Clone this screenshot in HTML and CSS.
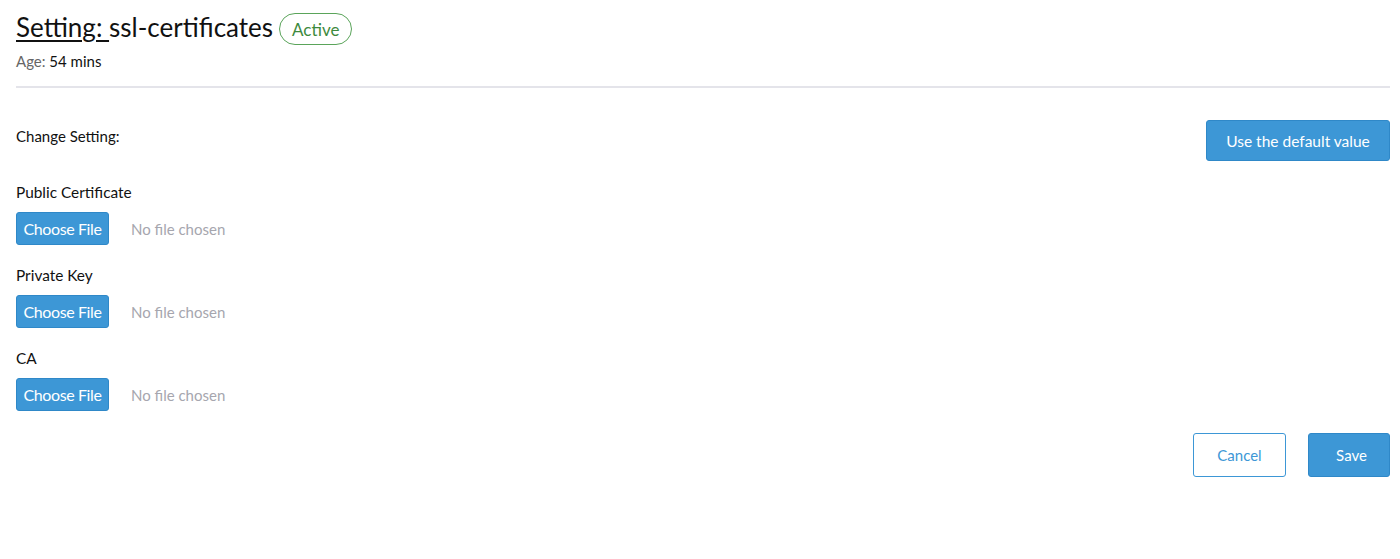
FILE: index.html
```html
<!DOCTYPE html>
<html lang="en">
<head>
    <meta charset="UTF-8">
    <title>Setting: ssl-certificates</title>
    <link rel="stylesheet" href="styles.css">
</head>
<body>

    <div class="page">
        <div class="header">
            <h1><span class="title-label">Setting: </span>ssl-certificates</h1>
            <span class="badge">Active</span>
        </div>
        <p class="age"><span class="age-label">Age:</span> 54 mins</p>

        <hr class="divider">

        <form class="setting-form">
            <div class="form-top">
                <p class="section-label">Change Setting:</p>
                <button type="button" class="btn btn-primary btn-default">Use the default value</button>
            </div>

            <div class="field">
                <label>Public Certificate</label>
                <div class="file-row">
                    <span class="file-btn">Choose File</span>
                    <span class="file-name">No file chosen</span>
                </div>
            </div>

            <div class="field">
                <label>Private Key</label>
                <div class="file-row">
                    <span class="file-btn">Choose File</span>
                    <span class="file-name">No file chosen</span>
                </div>
            </div>

            <div class="field">
                <label>CA</label>
                <div class="file-row">
                    <span class="file-btn">Choose File</span>
                    <span class="file-name">No file chosen</span>
                </div>
            </div>

            <div class="actions">
                <button type="button" class="btn btn-outline">Cancel</button>
                <button type="button" class="btn btn-primary btn-save">Save</button>
            </div>
        </form>
    </div>

</body>
</html>
```

FILE: styles.css
```css
/* Couleurs */
:root {
    --text: #111111;
    --muted: #666666;
    --blue: #3d97d6;
    --blue-border: #2f88c8;
    --green: #3d8a3d;
    --green-border: #5aa45a;
    --line: #e4e4ea;
}

* {
    box-sizing: border-box;
    margin: 0;
    padding: 0;
}

body {
    font-family: 'Lato', 'Noto Sans', sans-serif;
    color: var(--text);
    background: #ffffff;
}

.page {
    padding: 0 10px 0 16px;
}

.header {
    display: flex;
    align-items: center;
    padding-top: 10px;
    height: 43px;
}

h1 {
    font-size: 26px;
    font-weight: 400;
    line-height: 30px;
}

.title-label {
    text-decoration: underline;
    text-decoration-thickness: 2px;
    text-underline-offset: 3px;
}

.badge {
    margin-left: 6px;
    margin-top: 5px;
    height: 32px;
    padding: 0 12px;
    border: 1px solid var(--green-border);
    border-radius: 16px;
    color: var(--green);
    font-size: 17px;
    display: flex;
    align-items: center;
}

.age {
    margin-top: 8px;
    font-size: 15px;
    line-height: 20px;
}

.age-label {
    color: var(--muted);
}

.divider {
    border: none;
    border-top: 2px solid var(--line);
    margin-top: 15px;
}

.form-top {
    display: flex;
    justify-content: space-between;
    align-items: flex-start;
    margin-top: 32px;
}

.section-label {
    font-size: 15px;
    line-height: 20px;
    margin-top: 6px;
}

.btn {
    font-family: inherit;
    font-size: 16px;
    border-radius: 3px;
    cursor: pointer;
}

.btn-primary {
    background: var(--blue);
    border: 1px solid var(--blue-border);
    color: #ffffff;
}

.btn-default {
    width: 184px;
    height: 41px;
    font-size: 15.5px;
}

.field {
    margin-top: 21px;
}

.field label {
    display: block;
    font-size: 15.4px;
    line-height: 20px;
}

.field + .field {
    margin-top: 20px;
}

.file-row {
    display: flex;
    align-items: center;
    margin-top: 10px;
}

.file-btn {
    display: inline-flex;
    align-items: center;
    justify-content: center;
    width: 93px;
    height: 33px;
    background: var(--blue);
    border: 1px solid var(--blue-border);
    border-radius: 3px;
    color: #ffffff;
    font-size: 16px;
    letter-spacing: -0.4px;
}

.file-name {
    margin-left: 22px;
    font-size: 15px;
    color: #a6a6ae;
}

.actions {
    display: flex;
    justify-content: flex-end;
    gap: 22px;
    margin-top: 22px;
}

.btn-outline {
    width: 93px;
    height: 44px;
    background: #ffffff;
    border: 1px solid var(--blue);
    color: var(--blue);
    font-size: 15px;
}

.btn-save {
    width: 82px;
    height: 44px;
    font-size: 15px;
    padding-left: 5px;
}
```
